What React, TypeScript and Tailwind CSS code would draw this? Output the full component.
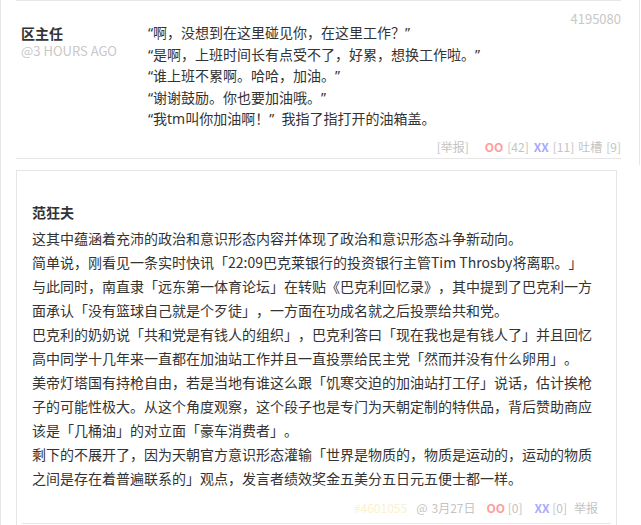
const first = [
  "“啊，没想到在这里碰见你，在这里工作？”",
  "“是啊，上班时间长有点受不了，好累，想换工作啦。”",
  "“谁上班不累啊。哈哈，加油。”",
  "“谢谢鼓励。你也要加油哦。”",
  "“我tm叫你加油啊！”\u00a0\u00a0我指了指打开的油箱盖。",
];

const second = [
  "这其中蕴涵着充沛的政治和意识形态内容并体现了政治和意识形态斗争新动向。",
  "简单说，刚看见一条实时快讯「22:09巴克莱银行的投资银行主管Tim Throsby将离职。」",
  "与此同时，南直隶「远东第一体育论坛」在转贴《巴克利回忆录》，其中提到了巴克利一方面承认「没有篮球自己就是个歹徒」，一方面在功成名就之后投票给共和党。",
  "巴克利的奶奶说「共和党是有钱人的组织」，巴克利答曰「现在我也是有钱人了」并且回忆高中同学十几年来一直都在加油站工作并且一直投票给民主党「然而并没有什么卵用」。",
  "美帝灯塔国有持枪自由，若是当地有谁这么跟「饥寒交迫的加油站打工仔」说话，估计挨枪子的可能性极大。从这个角度观察，这个段子也是专门为天朝定制的特供品，背后赞助商应该是「几桶油」的对立面「豪车消费者」。",
  "剩下的不展开了，因为天朝官方意识形态灌输「世界是物质的，物质是运动的，运动的物质之间是存在着普遍联系的」观点，发言者绩效奖金五美分五日元五便士都一样。",
];

export default function App() {
  return (
    <div className="h-[525px] w-[641px] overflow-hidden border-l border-[#e6e6e6] bg-white font-['Noto_Sans_CJK_SC',sans-serif] text-[#333] [text-spacing-trim:space-all]">
      {/* Comment */}
      <div className="h-[165px] w-[639px] border-r border-[#e6e6e6] pl-[15px] pr-[18px]">
        <div className="flex h-[159px] border-y border-[#e6e6e6]">
          <div className="w-[132px] shrink-0 pl-[5px] pt-[25px]">
            <div className="text-[14px] font-bold leading-[15px] text-[#333]">区主任</div>
            <div className="mt-[2px] text-[13px] leading-[16px] text-[#c8c8c8]">@3 HOURS AGO</div>
          </div>

          <div className="relative flex-1 pt-[21px]">
            <span className="absolute right-0 top-[9px] text-[13px] leading-[18px] text-[#c8c8c8]">
              4195080
            </span>
            <div className="font-['Noto_Sans','Noto_Sans_CJK_SC',sans-serif] text-[14px] leading-[21.5px]">
              {first.map((line) => (
                <p key={line}>{line}</p>
              ))}
            </div>
            <div className="mt-[8.5px] flex justify-end text-[12px] leading-[18px] text-[#c4c4c4]">
              <span>[举报]</span>
              <span className="ml-[16px] font-bold text-[#ff9c9c]">OO</span>
              <span className="ml-[4px]">[42]</span>
              <span className="ml-[5px] font-bold text-[#a9a9ff]">XX</span>
              <span className="ml-[4px]">[11]</span>
              <span className="ml-[4px]">吐槽</span>
              <span className="ml-[4px]">[9]</span>
            </div>
          </div>
        </div>
      </div>

      {/* Quoted */}
      <div className="ml-[15px] mt-[5px] w-[601px] border border-[#e6e6e6] p-[5px]">
        <div className="border-b border-[#e6e6e6] px-[10px] pb-[6px] pt-[27px]">
          <div className="text-[14px] font-bold leading-[18px]">范狂夫</div>
          <div className="mt-[5px] text-[14px] leading-[24px]">
            {second.map((p) => (
              <p key={p}>{p}</p>
            ))}
          </div>
          <div className="mt-[9px] pr-[3px] text-right text-[12px] leading-[18px] text-[#c4c4c4]">
            <span className="text-[#faf1cf]">#4601055</span>
            <span className="ml-[9px]">@</span>
            <span className="ml-[4px]">3月27日</span>
            <span className="ml-[11px] font-bold text-[#ff9c9c]">OO</span> [0]
            <span className="ml-[12px] font-bold text-[#a9a9ff]">XX</span> [0]
            <span className="ml-[7px]">举报</span>
          </div>
        </div>
      </div>
    </div>
  );
}
